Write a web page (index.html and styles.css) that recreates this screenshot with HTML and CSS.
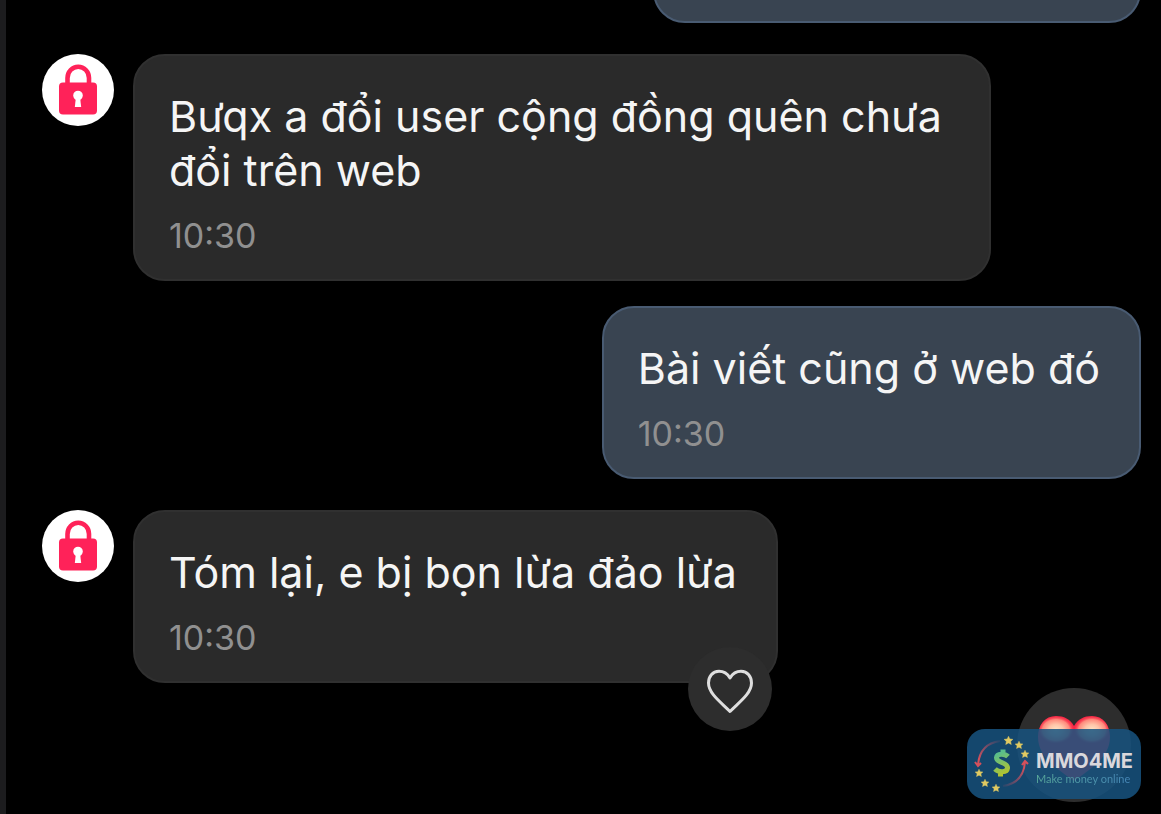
FILE: index.html
```html
<!DOCTYPE html>
<html lang="vi">
<head>
<meta charset="utf-8">
<meta name="viewport" content="width=device-width, initial-scale=1">
<title>Chat</title>
<link rel="stylesheet" href="styles.css">
</head>
<body>
<svg class="defs" aria-hidden="true">
  <symbol id="lock" viewBox="0 0 72 72">
    <path d="M25.500 32V24a10.500 11 0 0 1 21.500 0v8" fill="none" stroke="#ff2259" stroke-width="4.600"/>
    <rect x="17" y="28.500" width="38" height="32" rx="4" fill="#ff2259"/>
    <circle cx="36" cy="41.500" r="4.800" fill="#fff"/>
    <path d="M34 43h4l1.200 10h-6.400z" fill="#fff"/>
  </symbol>
  <symbol id="star" viewBox="-5 -5 10 10">
    <path d="M0-4.800 1.500-1.700 4.900-1.300 2.400 1 3.100 4.500 0 2.800-3.100 4.500-2.400 1-4.900-1.300-1.500-1.700z" fill="#e0ca62" stroke="#e0ca62" stroke-width=".5"/>
  </symbol>
</svg>
<main class="chat">
  <div class="row row-out"><div class="bubble bubble-out bubble-previous"></div></div>
  <article class="row">
    <svg class="avatar" role="img" aria-label="Avatar"><use href="#lock"/></svg>
    <div class="bubble bubble-in bubble-long">
      <p class="message">Bưqx a đổi user cộng đồng quên chưa đổi trên web</p>
      <time class="time">10:30</time>
    </div>
  </article>
  <article class="row row-out">
    <div class="bubble bubble-out">
      <p class="message">Bài viết cũng ở web đó</p>
      <time class="time">10:30</time>
    </div>
  </article>
  <article class="row">
    <svg class="avatar" role="img" aria-label="Avatar"><use href="#lock"/></svg>
    <div class="bubble bubble-in">
      <p class="message">Tóm lại, e bị bọn lừa đảo lừa</p>
      <time class="time">10:30</time>
      <button class="like" type="button" aria-label="Like">
        <svg class="like-icon" viewBox="0 0 48 48"><path d="M24 11C21 6 17.500 4.300 13 4.300 6.500 4.300 2.500 9.500 2.500 16c0 11 14 20.500 21.500 28.500C31.500 36.500 45.500 27 45.500 16c0-6.500-4-11.700-10.500-11.700-4.500 0-8 1.700-11 6.700z" fill="none" stroke="#dedede" stroke-width="3" stroke-linejoin="round"/></svg>
      </button>
    </div>
  </article>
</main>
<button class="react" type="button" aria-label="Love">
  <svg class="react-icon" viewBox="0 0 72 66">
    <defs>
      <radialGradient id="shine"><stop offset="0" stop-color="#ffe4c4"/><stop offset=".4" stop-color="#ffc4a8"/><stop offset=".75" stop-color="#ff8a7c"/><stop offset="1" stop-color="#ff3d50" stop-opacity="0"/></radialGradient>
      <clipPath id="heart"><path d="M36 10C32 3 26 0 18 0 7 0 0 9 0 21 0 42 21 54 36 65 51 54 72 42 72 21 72 9 65 0 54 0 46 0 40 3 36 10z"/></clipPath>
    </defs>
    <g clip-path="url(#heart)">
      <rect width="72" height="66" fill="#f52846"/>
      <ellipse cx="18" cy="14" rx="18" ry="14" fill="url(#shine)"/>
      <ellipse cx="54" cy="14" rx="18" ry="14" fill="url(#shine)"/>
    </g>
  </svg>
</button>
<aside class="brand">
  <svg class="brand-logo" viewBox="0 0 56 58" aria-hidden="true">
    <defs>
      <linearGradient id="money" gradientUnits="userSpaceOnUse" x1="20" y1="14" x2="34" y2="42"><stop offset=".2" stop-color="#59bd8b"/><stop offset="1" stop-color="#c5c51c"/></linearGradient>
      <linearGradient id="fadeA" x1="1" y1="0" x2="0" y2="1"><stop offset="0" stop-color="#c95468" stop-opacity=".1"/><stop offset=".8" stop-color="#d6505b"/></linearGradient>
      <linearGradient id="fadeB" x1="0" y1="1" x2="1" y2="0"><stop offset="0" stop-color="#c95468" stop-opacity=".1"/><stop offset=".8" stop-color="#d6505b"/></linearGradient>
    </defs>
    <path d="M26 6C12 8 5 17 4 30M1 27l3 4 3-3" fill="none" stroke="url(#fadeA)" stroke-width="2"/>
    <path d="M29 51C43 49 50 40 51 27M48 30l3-4 3 3" fill="none" stroke="url(#fadeB)" stroke-width="2"/>
    <path d="M34 21.500c-3-3-11-3.500-11.500 1C22 28 34 27 33.500 33c-.5 5-9 4.500-12.500 1M29 14.500v5M26.500 36v5.500" fill="none" stroke="url(#money)" stroke-width="5"/>
    <use href="#star" x="30" y="1" width="9" height="9"/>
    <use href="#star" x="41" y="6" width="8" height="8"/>
    <use href="#star" x="47" y="15" width="8" height="8"/>
    <use href="#star" x="1" y="34" width="8" height="8"/>
    <use href="#star" x="7" y="44" width="8" height="8"/>
    <use href="#star" x="18" y="49" width="8" height="8"/>
  </svg>
  <div class="brand-text">
    <strong class="brand-name">MMO4ME</strong>
    <span class="brand-tagline">Make money online</span>
  </div>
</aside>
</body>
</html>
```
FILE: styles.css
```css
* { box-sizing: border-box; }

body {
  margin: 0;
  min-height: 100vh;
  background: #000;
  border-left: 6px solid #1c1c1e;
  font-family: Inter, "Noto Sans", sans-serif;
  position: relative;
  overflow: hidden;
}

.defs {
  position: absolute;
  width: 0;
  height: 0;
}

.chat {
  display: flex;
  flex-direction: column;
  margin-top: -50px;
  padding: 0 20px 0 36px;
}

.row {
  display: flex;
  align-items: flex-start;
  gap: 19px;
  margin-bottom: 25px;
}

.row-out {
  justify-content: flex-end;
  margin-bottom: 31px;
}

.avatar {
  flex: none;
  width: 72px;
  height: 72px;
  border-radius: 50%;
  background: #fff;
}

.bubble {
  position: relative;
  padding: 33px 39px 23px 34px;
  border: 2px solid;
  border-radius: 32px;
}

.bubble-in {
  background: #2a2a2a;
  border-color: #303030;
}

.bubble-out {
  background: #394451;
  border-color: #495b72;
}

.bubble-previous {
  width: 488px;
  height: 73px;
}

.bubble-long {
  max-width: 858px;
}

.message {
  margin: 0;
  color: #f5f5f5;
  font-size: 43px;
  line-height: 54px;
}

.time {
  display: block;
  margin-top: 19px;
  color: #909090;
  font-size: 34px;
  line-height: 40px;
}

.like,
.react {
  position: absolute;
  display: grid;
  place-items: center;
  padding: 0;
  border: 0;
  border-radius: 50%;
  background: #2d2d2d;
}

.like {
  right: 4px;
  bottom: -50px;
  width: 84px;
  height: 84px;
}

.like-icon {
  width: 48px;
  height: 48px;
  margin-top: 4px;
}

.react {
  right: 30px;
  bottom: 12px;
  width: 114px;
  height: 114px;
}

.react-icon {
  width: 72px;
  height: 66px;
  margin-top: 8px;
}

.brand {
  position: absolute;
  right: 20px;
  bottom: 15px;
  display: flex;
  align-items: center;
  gap: 6px;
  width: 174px;
  height: 70px;
  padding: 0 7px;
  border-radius: 18px;
  background: rgba(24, 84, 128, 0.85);
}

.brand-logo {
  flex: none;
  width: 56px;
  height: 58px;
}

.brand-text {
  display: flex;
  flex-direction: column;
  gap: 2px;
  padding-top: 8px;
  white-space: nowrap;
}

.brand-name {
  color: #dad8dc;
  font-size: 20px;
  line-height: 20px;
}

.brand-tagline {
  color: transparent;
  background: linear-gradient(90deg, #58a89a, #4585b8);
  background-clip: text;
  font-size: 11px;
  font-family: Lato, sans-serif;
  line-height: 12px;
}
```
